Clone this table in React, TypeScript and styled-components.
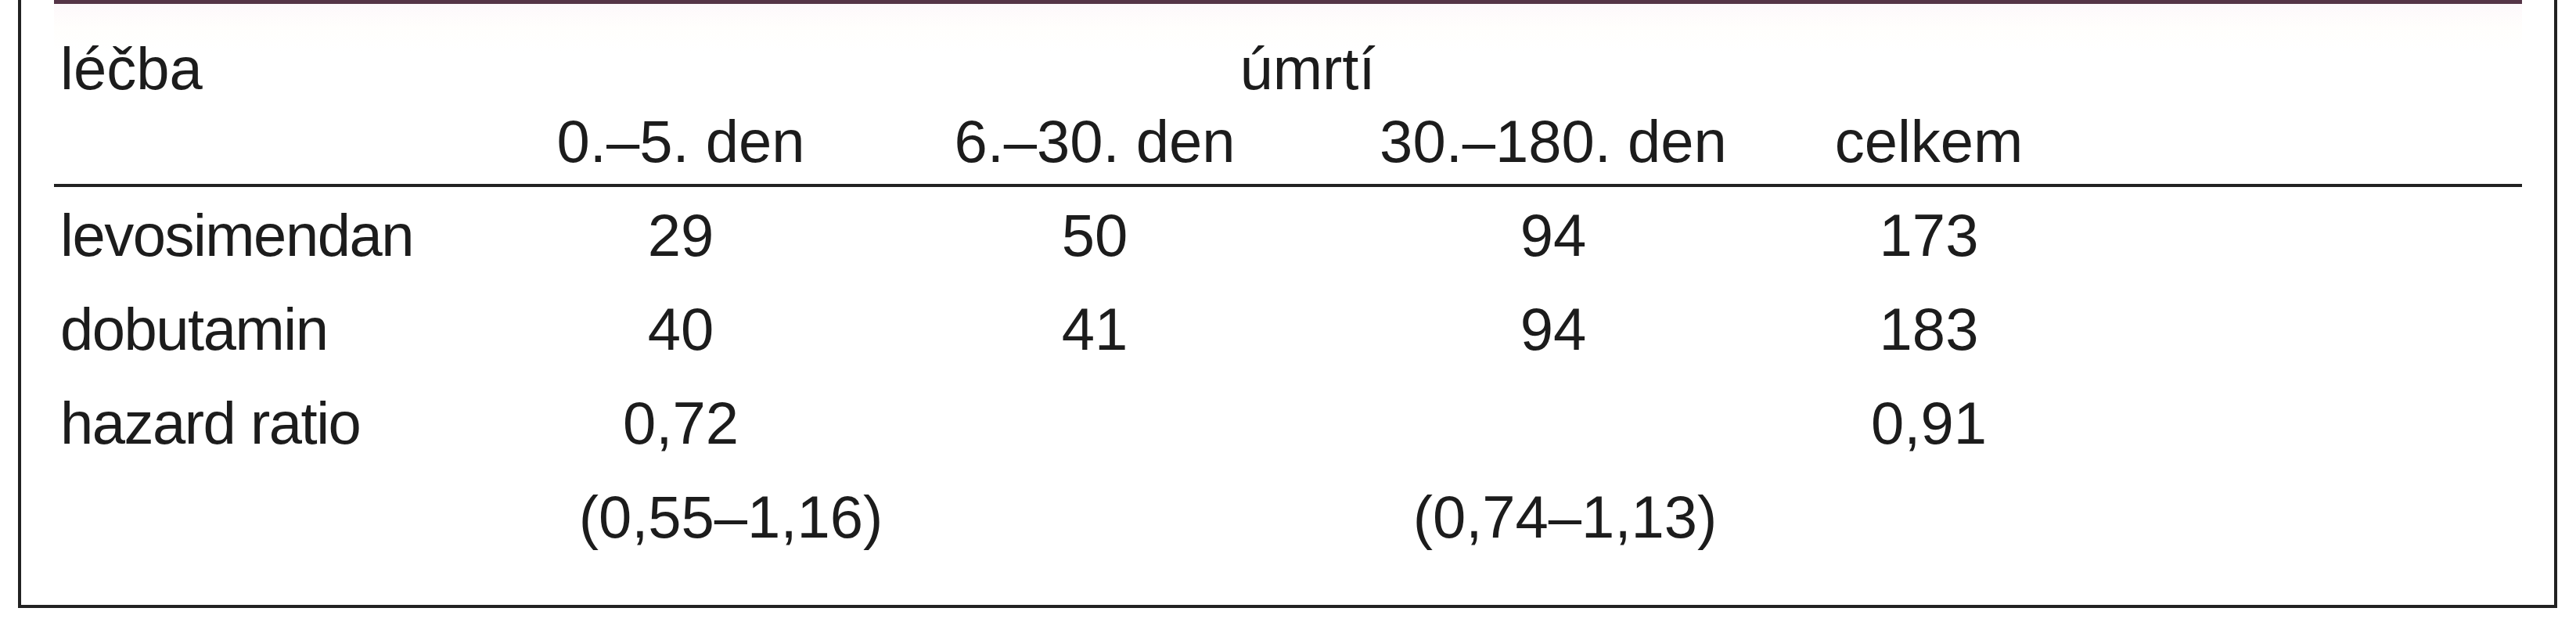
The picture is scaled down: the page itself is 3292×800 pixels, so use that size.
import styled, { createGlobalStyle } from "styled-components"

const GlobalStyle = createGlobalStyle`
  html, body {
    margin: 0;
    padding: 0;
    background: #fff;
  }

  body {
    font-family: "Liberation Sans", Arial, sans-serif;
    color: #1c1c1c;
  }
`

type Row = {
  label: string
  values: string[]
}

const rows: Row[] = [
  { label: "levosimendan", values: ["29", "50", "94", "173"] },
  { label: "dobutamin", values: ["40", "41", "94", "183"] },
  { label: "hazard ratio", values: ["0,72", "", "", "0,91"] },
]

const periods = ["0.–5. den", "6.–30. den", "30.–180. den", "celkem"]

export default function App() {
  return (
    <Page>
      <GlobalStyle />
      <Frame>
        <AccentBar />
        <Head>
          <HeadGrid>
            <Label>léčba</Label>
            <Cell $span={4} $shift={113}>
              úmrtí
            </Cell>
            <span />
            <span />
            {periods.map((p) => (
              <Cell key={p}>{p}</Cell>
            ))}
            <span />
          </HeadGrid>
        </Head>
        <Rule />
        <BodyGrid>
          {rows.map((row) => (
            <Line key={row.label}>
              <Label $tight>{row.label}</Label>
              {row.values.map((v, i) => (
                <Cell key={i}>{v}</Cell>
              ))}
              <span />
            </Line>
          ))}
          <Line>
            <span />
            <Cell $shift={128}>(0,55–1,16)</Cell>
            <span />
            <Cell $shift={30}>(0,74–1,13)</Cell>
            <span />
            <span />
          </Line>
        </BodyGrid>
      </Frame>
    </Page>
  )
}

const columns = "536.5px 529px 529px 643px 317px 1fr"

const Page = styled.div`
  padding-left: 23px;
  width: 3292px;
  height: 800px;
  box-sizing: border-box;
`

const Frame = styled.div`
  width: 3245px;
  height: 777px;
  box-sizing: border-box;
  border: 4px solid #222;
  border-top: 0;
  padding: 0 41px 0 42px;
  display: flex;
  flex-direction: column;
`

const AccentBar = styled.div`
  height: 5px;
  background: #553447;
`

const Head = styled.div`
  padding: 36px 0 8px;
  background: linear-gradient(#fdf8fb 0, #fffefc 30px, #ffffff 60px);
`

const HeadGrid = styled.div`
  display: grid;
  grid-template-columns: ${columns};
  grid-auto-rows: 93px;
  font-size: 76px;
  line-height: 93px;
`

const Rule = styled.div`
  height: 4px;
  background: #222;
`

const BodyGrid = styled.div`
  padding-top: 2px;
  font-size: 76px;
  line-height: 120px;
`

const Line = styled.div`
  display: grid;
  grid-template-columns: ${columns};
  height: 120px;
`

const Label = styled.div<{ $tight?: boolean }>`
  padding-left: 8px;
  white-space: nowrap;
  letter-spacing: ${(p) => (p.$tight ? "-1.5px" : "0")};
`

const Cell = styled.div<{ $span?: number; $shift?: number }>`
  grid-column: ${(p) => (p.$span ? `span ${p.$span}` : "auto")};
  padding-left: ${(p) => p.$shift ?? 0}px;
  text-align: center;
  white-space: nowrap;
`
